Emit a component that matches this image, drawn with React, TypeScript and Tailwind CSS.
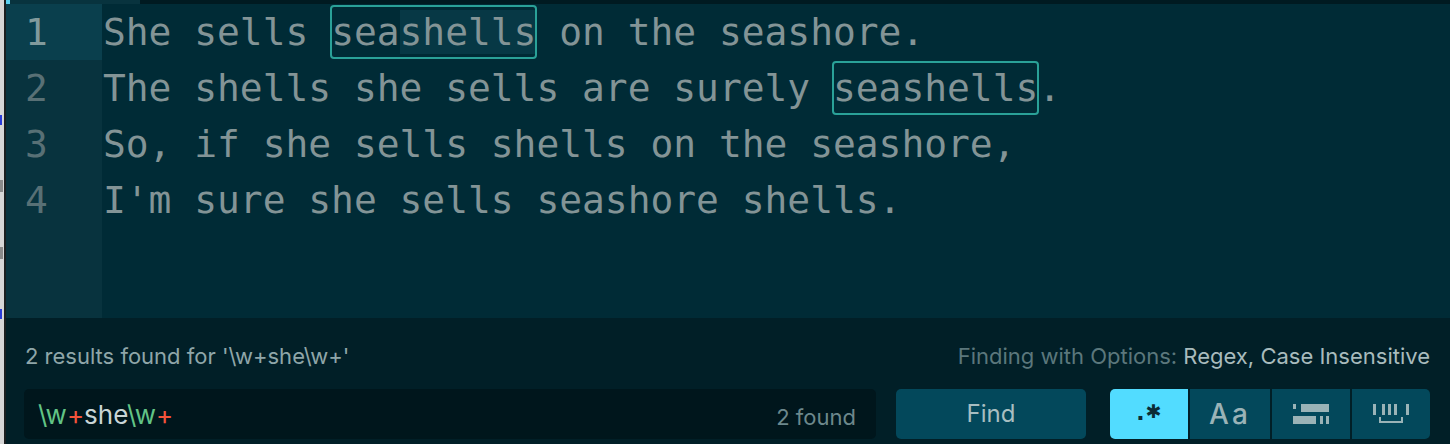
import React from "react";

// Solarized-dark editor with the find-and-replace panel open
const lines: React.ReactNode[] = [
  <>
    She sells{" "}
    <Match>
      sea<span className="bg-[#073845]">shells</span>
    </Match>{" "}
    on the seashore.
  </>,
  <>
    The shells she sells are surely <Match>seashells</Match>.
  </>,
  <>So, if she sells shells on the seashore,</>,
  <>I'm sure she sells seashore shells.</>,
];

function Match({ children }: { children: React.ReactNode }) {
  return (
    <span className="relative inline-block h-[56px] align-top">
      {children}
      <span className="pointer-events-none absolute top-[1px] bottom-[1px] left-[-1px] right-[-1px] rounded-[4px] border-2 border-[#2aa198]" />
    </span>
  );
}

function SelectionIcon() {
  return (
    <svg width="36" height="20" viewBox="0 0 36 20" fill="#9ab3b7">
      <rect x="0" y="0" width="3" height="5" />
      <rect x="8" y="0" width="28" height="8" />
      <rect x="0" y="12" width="23" height="8" />
      <rect x="27" y="12" width="3" height="8" />
      <rect x="33" y="12" width="3" height="8" />
    </svg>
  );
}

function WholeWordIcon() {
  return (
    <svg width="36" height="20" viewBox="0 0 36 20" fill="#9ab3b7">
      <rect x="0" y="0" width="3" height="11" />
      <rect x="9" y="0" width="3" height="11" />
      <rect x="15" y="0" width="3" height="11" />
      <rect x="21" y="0" width="3" height="11" />
      <rect x="33" y="0" width="3" height="11" />
      <rect x="6" y="13" width="2" height="6" />
      <rect x="28" y="13" width="2" height="6" />
      <rect x="6" y="17" width="24" height="2" />
    </svg>
  );
}

export default function App() {
  return (
    <div className="flex h-[444px] w-[1450px] overflow-hidden bg-[#011f27] font-['Inter',sans-serif]">
      {/* sliver of the window behind */}
      <div className="flex w-[6px] shrink-0">
        <div className="flex w-[4px] flex-col bg-[#d6d6d6]">
          <div className="mt-[115px] h-[10px] w-[2px] bg-[#2a3bd8]" />
          <div className="mt-[55px] h-[12px] w-[3px] bg-[#8a8a8a]" />
          <div className="mt-[55px] h-[12px] w-[3px] bg-[#8a8a8a]" />
          <div className="mt-[50px] h-[10px] w-[2px] bg-[#2a3bd8]" />
        </div>
        <div className="w-[2px] bg-[#1b1f20]" />
      </div>

      <div className="flex w-[1444px] flex-col">
        <div className="flex h-[4px] shrink-0">
          <div className="w-[4px] bg-[#5bd2f2]" />
          <div className="w-[130px] bg-[#08333e]" />
          <div className="flex-1 bg-[#001a21]" />
        </div>

        {/* editor */}
        <div className="flex h-[314px] shrink-0 bg-[#002b36] font-['DejaVu_Sans_Mono',monospace] text-[37.9px] leading-[56px]">
          <div className="w-[96px] shrink-0 bg-[#08333e] text-[#587075]">
            {lines.map((_, i) => (
              <div
                key={i}
                className={`h-[56px] pl-[19px] ${i === 0 ? "bg-[#0a3f4d] text-[#819a9c]" : ""}`}
              >
                {i + 1}
              </div>
            ))}
          </div>
          <div className="flex-1 whitespace-pre pl-[1px] text-[#839496]">
            {lines.map((l, i) => (
              <div key={i} className="h-[56px]">
                {l}
              </div>
            ))}
          </div>
        </div>

        {/* find panel */}
        <div className="flex flex-1 flex-col pl-[18px] pr-[20px] pt-[27px]">
          <div className="flex h-[22px] items-center justify-between text-[22px] leading-[22px]">
            <span className="pl-[1px] text-[#8fa6a9]">2 results found for '\w+she\w+'</span>
            <span className="text-[#5b777c]">
              Finding with Options: <span className="text-[#a8bbbd]">Regex, Case Insensitive</span>
            </span>
          </div>

          <div className="mt-[22px] flex h-[50px] items-stretch">
            <div className="flex w-[852px] items-center justify-between rounded-[5px] bg-[#00161c] pl-[14px] pr-[20px]">
              <span className="text-[26px]">
                <span className="text-[#62c486]">\w</span>
                <span className="text-[#f2533b]">+</span>
                <span className="text-[#c9d5d6]">she</span>
                <span className="text-[#62c486]">\w</span>
                <span className="text-[#f2533b]">+</span>
              </span>
              <span className="pt-[6px] text-[22px] text-[#6d888c]">2 found</span>
            </div>

            <button className="ml-[20px] w-[190px] rounded-[5px] bg-[#03485b] text-[24px] text-[#a8bec1]">
              Find
            </button>

            <div className="ml-[24px] flex w-[320px] gap-[2px] overflow-hidden rounded-[5px]">
              <div className="flex w-[78px] items-end justify-center bg-[#52dcff] pb-[15px] font-['DejaVu_Sans',sans-serif] font-bold leading-none text-[#0b2c36]">
                <span className="text-[22px]">.</span>
                <span className="mb-[3px] ml-[1px] text-[19px]">✱</span>
              </div>
              <div className="flex w-[80px] items-center justify-center bg-[#03485b] text-[28px] font-medium tracking-[3px] text-[#9ab3b7]">
                Aa
              </div>
              <div className="flex w-[78px] items-center justify-center bg-[#03485b]">
                <SelectionIcon />
              </div>
              <div className="flex flex-1 items-center justify-center bg-[#03485b]">
                <WholeWordIcon />
              </div>
            </div>
          </div>
        </div>
      </div>
    </div>
  );
}
